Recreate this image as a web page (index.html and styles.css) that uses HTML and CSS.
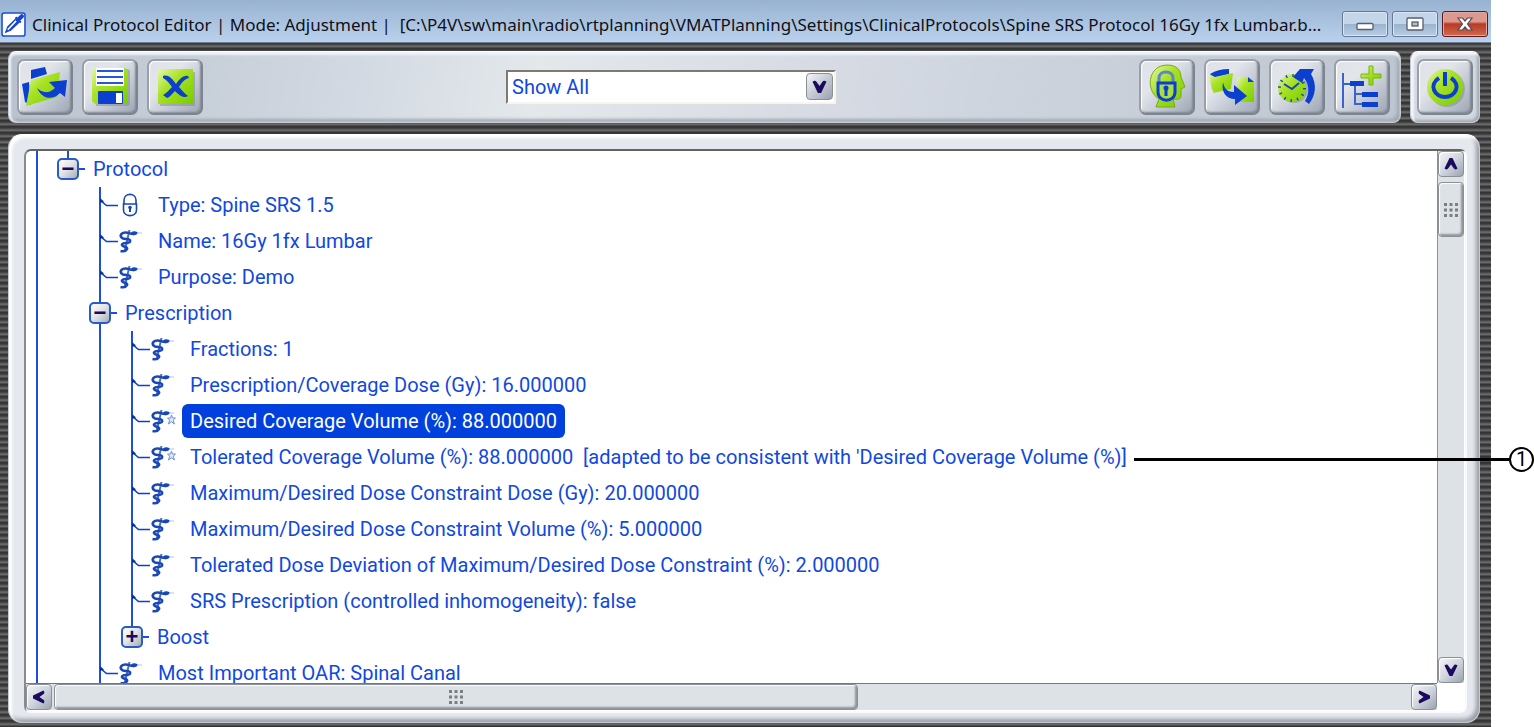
FILE: index.html
```
<!DOCTYPE html>
<html lang="en">
<head>
<meta charset="UTF-8" />
<title>Clinical Protocol Editor</title>
<link rel="stylesheet" href="styles.css">
</head>
<body>

<!-- shared icons -->
<svg class="defs" aria-hidden="true">
  <defs>
    <linearGradient id="green" x1="0" y1="0" x2="1" y2="1">
      <stop offset="0" stop-color="#e4f7a8" />
      <stop offset="0.4" stop-color="#a9e225" />
      <stop offset="1" stop-color="#78cc00" />
    </linearGradient>
    <symbol id="branch" viewBox="0 0 18 36">
      <path d="M0 13L6.500 18.500H18" fill="none" stroke="#0a40d8" stroke-width="1.600" />
      <path d="M0 11L4 14.500L0 16Z" fill="#0a2f9c" />
    </symbol>
    <symbol id="snake" viewBox="0 0 26 24">
      <path d="M11.500 1L6.500 23" stroke="#4a70c8" stroke-width="2" fill="none" />
      <path d="M17 4.500C14 6.500 11 3 7 3.500C2 4 1.500 8 5 9.500C8 10.500 13 9.500 12 12.500C11 15 5 13 4 15.500C3.500 18 10 17.500 9 20C8 22 5 22.500 2.500 22" stroke="#1a48b8" stroke-width="2.600" fill="none" />
      <path d="M12.500 5C13 1.500 17 1.500 20 3.500C19 6.500 15 7 12.500 5Z" fill="#1746b5" />
      <path d="M19 4H24" stroke="#b4c2e6" stroke-width="1" />
    </symbol>
    <symbol id="star" viewBox="0 0 26 24">
      <path d="M21.500 6L22.500 9L25.500 9L23.200 11.200L24.500 15L21.500 12.800L18.500 15L19.600 11.200L17.500 9H20.500Z" fill="#dfe7fa" stroke="#6f8fd8" stroke-width="1" />
    </symbol>
    <symbol id="lock" viewBox="0 0 26 24">
      <path d="M6 11V7C6 -0.500 18 -0.500 18 7V11" fill="none" stroke="#1746b5" stroke-width="1.600" />
      <path d="M5.500 11H18.500V17C18.500 24.500 5.500 24.500 5.500 17Z" fill="#fff" stroke="#1746b5" stroke-width="1.600" />
      <circle cx="12" cy="14.500" r="1.800" fill="#1746b5" />
      <path d="M12 14V19" stroke="#1746b5" stroke-width="2" />
    </symbol>
    <symbol id="chevron" viewBox="0 0 14 14">
      <path d="M0.500 2.500Q3 0.500 4.500 3L7 6.500L9.500 3Q11 0.500 13.500 2.500L8.500 13H5.500Z" fill="#1c0b5c" />
    </symbol>
    <symbol id="grip" viewBox="0 0 14 14">
      <g fill="#7b7f84">
        <path d="M0 0h3v3h-3zM5.500 0h3v3h-3zM11 0h3v3h-3zM0 5.500h3v3h-3zM5.500 5.500h3v3h-3zM11 5.500h3v3h-3zM0 11h3v3h-3zM5.500 11h3v3h-3zM11 11h3v3h-3z" />
      </g>
    </symbol>
  </defs>
</svg>

<div class="window">
  <header class="titlebar">
    <svg class="app-icon" viewBox="0 0 24 24">
      <rect x="1" y="1" width="22" height="22" rx="2" fill="#fff" stroke="#1c4fd0" stroke-width="1.500" />
      <path d="M3.500 20.500L6 14L14 6L18 10L9.500 18Z" fill="#1746c8" />
      <path d="M6.500 17L14.500 8.500" stroke="#fff" stroke-width="1.500" />
      <path d="M14 5L19 10" stroke="#1746c8" stroke-width="2" />
      <path d="M17 7L20 4" stroke="#1746c8" stroke-width="4" stroke-linecap="round" />
    </svg>
    <h1 class="title">Clinical Protocol Editor | Mode: Adjustment |&nbsp; [C:\P4V\sw\main\radio\rtplanning\VMATPlanning\Settings\ClinicalProtocols\Spine SRS Protocol 16Gy 1fx Lumbar.b...</h1>
    <div class="win-buttons">
      <button class="win-btn" aria-label="Minimize">
        <svg viewBox="0 0 18 14"><rect x="1" y="6.500" width="16" height="6" rx="1" fill="#fff" stroke="#565f6b" stroke-width="1.300" /></svg>
      </button>
      <button class="win-btn" aria-label="Maximize">
        <svg viewBox="0 0 18 14"><rect x="1" y="1" width="16" height="12" rx="1" fill="#fff" stroke="#565f6b" stroke-width="1.300" /><rect x="6" y="5" width="6" height="4" fill="#a9bfd8" stroke="#565f6b" stroke-width="1.300" /></svg>
      </button>
      <button class="win-btn win-close" aria-label="Close">
        <svg viewBox="0 0 18 14"><path d="M2 1H6.500L9 4L11.500 1H16L11.500 7L16 13H11.500L9 10L6.500 13H2L6.500 7Z" fill="#fff" stroke="#5b4a50" stroke-width="1.200" /></svg>
      </button>
    </div>
  </header>

  <div class="bars">
    <div class="panel toolbar">
      <div class="tools">
        <button class="tool" aria-label="Open">
          <svg viewBox="0 0 52 52">
            <path d="M3 23L10 21L12 44L6 41Z" fill="#0a3fd0" />
            <path d="M12 9L26 6L28 13L12 18Z" fill="#0a3fd0" />
            <path d="M12 19L41 11L38 36L7 45Z" fill="url(#green)" />
            <path d="M18 27C23 32 30 33 36 27L30 21L48 19L46 36L41 32C33 40 23 38 18 27Z" fill="#0a3fd0" />
          </svg>
        </button>
        <button class="tool" aria-label="Save">
          <svg viewBox="0 0 52 52">
            <path d="M11 8H43Q46 8 46 11V42Q46 45 43 45H12Z" fill="#7f8792" opacity="0.500" />
            <path d="M10 7H41L44 10V40Q44 43 41 43H11L8 40V9Z" fill="url(#green)" />
            <rect x="12" y="7" width="28" height="18" fill="#fff" />
            <path d="M13 10H39M13 16H39M13 22H39" stroke="#2458d8" stroke-width="2" />
            <rect x="14" y="30" width="25" height="13" rx="1" fill="#0a3fd0" />
            <rect x="32" y="32" width="6" height="10" fill="#fff" />
          </svg>
        </button>
        <button class="tool" aria-label="Discard">
          <svg viewBox="0 0 52 52">
            <rect x="11" y="11" width="35" height="34" fill="#7f8792" opacity="0.500" />
            <rect x="9" y="8" width="35" height="35" fill="url(#green)" />
            <path d="M14 15C20 13 24 19 27 23C30 19 34 14 39 15L40 17C35 18 32 23 30 26C33 29 36 33 39 35C35 38 30 34 26 30C23 33 21 36 18 37L14 34C19 31 21 28 23 26C20 22 18 19 14 17Z" fill="#0a3fd0" />
          </svg>
        </button>
      </div>

      <div class="filter">
        <select class="filter-select" aria-label="Filter">
          <option>Show All</option>
        </select>
        <span class="filter-arrow"><svg viewBox="0 0 14 14"><use href="#chevron" /></svg></span>
      </div>

      <div class="tools">
        <button class="tool" aria-label="Unlock user">
          <svg viewBox="0 0 52 52">
            <path d="M15 46L18 38C6 31 6 10 20 5C31 2 40 6 40 16L44 26L40 28V36Q39 39 32 38L34 46Z" fill="url(#green)" stroke="#78a81c" />
            <path d="M18 22V17C18 9 32 9 32 17V22" fill="none" stroke="#5c86c8" stroke-width="3" />
            <path d="M17 22H34V31C34 42 17 42 17 31Z" fill="#a9dc45" stroke="#0a3fd0" stroke-width="3" />
            <circle cx="25" cy="27" r="2.500" fill="#0a3fd0" /><path d="M25 26V35" stroke="#0a3fd0" stroke-width="3" />
          </svg>
        </button>
        <button class="tool" aria-label="Transfer">
          <svg viewBox="0 0 52 52">
            <path d="M4 13Q12 8 23 8V13L7 17Z" fill="#0a3fd0" />
            <path d="M3 13L9 16L8 30L6 29ZM9 16L27 12L25 28L7 32Z" fill="url(#green)" />
            <path d="M31 16H41L48 22V41H31Z" fill="url(#green)" />
            <path d="M42 16L48 21H42Z" fill="#0a3fd0" />
            <path d="M17 21C18 28 22 31 28 31V24L41 35L29 44V38C20 38 15 31 17 21Z" fill="#0a3fd0" />
          </svg>
        </button>
        <button class="tool" aria-label="Restore">
          <svg viewBox="0 0 52 52">
            <circle cx="23" cy="28" r="14" fill="#7f8792" opacity="0.500" />
            <circle cx="21" cy="27" r="14" fill="url(#green)" />
            <circle cx="21" cy="27" r="12.500" fill="none" stroke="#1746b5" stroke-width="3" stroke-dasharray="1.400 5.140" />
            <path d="M13 23L21 28L28 22" fill="none" stroke="#1746b5" stroke-width="2" />
            <path d="M22 16L29 8H43L40 13C46 23 45 34 38 43L34 40C39 32 38 23 33 17L31 22Z" fill="#0a3fd0" />
          </svg>
        </button>
        <button class="tool" aria-label="Add node">
          <svg viewBox="0 0 52 52">
            <path d="M7 12V47M7 23H26M19 23V43H27M19 33H27" fill="none" stroke="#3a63cc" stroke-width="2" />
            <path d="M14 20H28V25H14ZM26 31H42V36H26ZM26 41H42V46H26Z" fill="#0a3fd0" />
            <path d="M33 5H37V13H45V17H37V24H33V17H25V13H33Z" fill="url(#green)" stroke="#78b80c" />
          </svg>
        </button>
      </div>
    </div>

    <div class="panel power">
      <button class="tool" aria-label="Exit">
        <svg viewBox="0 0 52 52">
          <circle cx="28" cy="28" r="18" fill="#7f8792" opacity="0.500" />
          <circle cx="26" cy="26" r="18" fill="url(#green)" />
          <path d="M20 17C9 24 16 36 26 36C36 36 43 24 32 17M26 11V25" fill="none" stroke="#0a3fd0" stroke-width="4" />
        </svg>
      </button>
    </div>
  </div>

  <main class="panel content">
    <div class="well">
      <div class="viewport">
        <ul class="tree">
          <li class="node-item">
            <div class="row"><button class="toggle" aria-label="Collapse Protocol">&minus;</button><span class="label">Protocol</span></div>
            <ul>
              <li><div class="row leaf"><svg class="branch"><use href="#branch" /></svg><svg class="icon"><use href="#lock" /></svg><span class="label">Type: Spine SRS 1.5</span></div></li>
              <li><div class="row leaf"><svg class="branch"><use href="#branch" /></svg><svg class="icon"><use href="#snake" /></svg><span class="label">Name: 16Gy 1fx Lumbar</span></div></li>
              <li><div class="row leaf"><svg class="branch"><use href="#branch" /></svg><svg class="icon"><use href="#snake" /></svg><span class="label">Purpose: Demo</span></div></li>
              <li>
                <div class="row"><button class="toggle" aria-label="Collapse Prescription">&minus;</button><span class="label">Prescription</span></div>
                <ul>
                  <li><div class="row leaf"><svg class="branch"><use href="#branch" /></svg><svg class="icon"><use href="#snake" /></svg><span class="label">Fractions: 1</span></div></li>
                  <li><div class="row leaf"><svg class="branch"><use href="#branch" /></svg><svg class="icon"><use href="#snake" /></svg><span class="label">Prescription/Coverage Dose (Gy): 16.000000</span></div></li>
                  <li><div class="row leaf"><svg class="branch"><use href="#branch" /></svg><svg class="icon"><use href="#snake" /><use href="#star" /></svg><span class="label selected">Desired Coverage Volume (%): 88.000000</span></div></li>
                  <li><div class="row leaf"><svg class="branch"><use href="#branch" /></svg><svg class="icon"><use href="#snake" /><use href="#star" /></svg><span class="label">Tolerated Coverage Volume (%): 88.000000  [adapted to be consistent with 'Desired Coverage Volume (%)]</span></div></li>
                  <li><div class="row leaf"><svg class="branch"><use href="#branch" /></svg><svg class="icon"><use href="#snake" /></svg><span class="label">Maximum/Desired Dose Constraint Dose (Gy): 20.000000</span></div></li>
                  <li><div class="row leaf"><svg class="branch"><use href="#branch" /></svg><svg class="icon"><use href="#snake" /></svg><span class="label">Maximum/Desired Dose Constraint Volume (%): 5.000000</span></div></li>
                  <li><div class="row leaf"><svg class="branch"><use href="#branch" /></svg><svg class="icon"><use href="#snake" /></svg><span class="label">Tolerated Dose Deviation of Maximum/Desired Dose Constraint (%): 2.000000</span></div></li>
                  <li><div class="row leaf"><svg class="branch"><use href="#branch" /></svg><svg class="icon"><use href="#snake" /></svg><span class="label">SRS Prescription (controlled inhomogeneity): false</span></div></li>
                  <li class="last"><div class="row"><button class="toggle" aria-label="Expand Boost">+</button><span class="label">Boost</span></div></li>
                </ul>
              </li>
              <li><div class="row leaf"><svg class="branch"><use href="#branch" /></svg><svg class="icon"><use href="#snake" /></svg><span class="label">Most Important OAR: Spinal Canal</span></div></li>
            </ul>
          </li>
        </ul>
      </div>

      <div class="scroll-v">
        <button class="scroll-btn" aria-label="Scroll up"><svg class="up"><use href="#chevron" /></svg></button>
        <div class="thumb"><svg><use href="#grip" /></svg></div>
        <button class="scroll-btn end" aria-label="Scroll down"><svg><use href="#chevron" /></svg></button>
      </div>

      <div class="scroll-h">
        <button class="scroll-btn" aria-label="Scroll left"><svg class="left"><use href="#chevron" /></svg></button>
        <div class="thumb"><svg><use href="#grip" /></svg></div>
        <button class="scroll-btn end" aria-label="Scroll right"><svg class="right"><use href="#chevron" /></svg></button>
      </div>
    </div>
  </main>
</div>

<!-- callout drawn over the window -->
<div class="callout"><span class="callout-line"></span><span class="callout-number">1</span></div>

</body>
</html>
```
FILE: styles.css
```
* {
  box-sizing: border-box;
}
body {
  margin: 0;
  height: 100vh;
  padding-right: 43px;
  background: #fff;
  position: relative;
  overflow: hidden;
  font-family: Roboto, "Liberation Sans", Arial, sans-serif;
  font-size: 20px;
  color: #1048e0;
}
button {
  padding: 0;
  cursor: pointer;
}
svg {
  display: block;
}
.defs {
  position: absolute;
  width: 0;
  height: 0;
}
.window {
  height: 100%;
  display: flex;
  flex-direction: column;
  background: repeating-linear-gradient(#333 0, #3a3a3a 2px, #6a6a6a 4px, #666 5px, #333 6px);
}

/* title bar */
.titlebar {
  display: flex;
  align-items: center;
  height: 43px;
  padding: 6px 3px 0 1px;
  background: linear-gradient(#98b3d1, #b9d1ec);
  border-bottom: 1px solid #6f7f90;
}
.app-icon {
  width: 25px;
  height: 25px;
  margin-right: 6px;
}
.title {
  flex: 1;
  min-width: 0;
  margin: 0;
  white-space: nowrap;
  font: 17px "Noto Sans", "Open Sans", sans-serif;
  color: #101018;
}
.win-buttons {
  display: flex;
  gap: 4px;
}
.win-btn {
  display: flex;
  justify-content: center;
  align-items: center;
  width: 46px;
  height: 26px;
  border: 1px solid #65788f;
  border-radius: 3px;
  background: linear-gradient(#c3d5e9 48%, #9bb3cd 50%, #b6cde6);
  box-shadow: inset 0 0 0 1px #d9e6f4;
}
.win-btn svg {
  width: 18px;
  height: 14px;
}
.win-close {
  border-color: #571c20;
  background: linear-gradient(#dc9a8f 40%, #b93a25 50%, #cf6a50);
  box-shadow: inset 0 0 0 1px #e3a99f;
}

/* toolbar */
.bars {
  display: flex;
  gap: 9px;
  padding: 8px 11px 0 8px;
}
.panel {
  border: 1px solid #c5cad2;
  border-top-color: #fff;
  border-radius: 8px;
}
.toolbar {
  flex: 1;
  display: flex;
  justify-content: space-between;
  align-items: center;
  height: 72px;
  padding: 0 10px 0 8px;
  background: linear-gradient(100deg, #b8c2ce, #d3d9e2 25%, #e3e8eb 38%, #d5dae3 60%, #bcc5d0);
  box-shadow: inset 0 3px 2px #eef2fa, inset 2px 0 2px #eef2fa, inset -3px -3px 3px #a2a8b0;
}
.power {
  display: flex;
  align-items: center;
  height: 72px;
  padding: 0 6px;
  background: #d3d8e1;
  box-shadow: inset 3px 3px 2px #f2f4fa, inset -2px -2px 3px #a2a8b0;
}
.tools {
  display: flex;
  gap: 9px;
}
.tool {
  width: 56px;
  height: 56px;
  border: 2px solid #9a9fa8;
  border-right-color: #7d848e;
  border-bottom-color: #7d848e;
  border-radius: 7px;
  background: linear-gradient(135deg, #dfe3e9, #e2e5ea 35%, #c8ced8 60%, #9da6b4);
  box-shadow: inset 1px 1px 1px #fff, inset -1px -1px 2px #7f8895;
}
.tool svg {
  width: 52px;
  height: 52px;
}
.filter {
  position: relative;
}
.filter-select {
  display: block;
  appearance: none;
  width: 330px;
  height: 34px;
  padding: 0 30px 0 4px;
  border: 2px solid #7b7b74;
  border-right-color: #f7f5ec;
  border-bottom-color: #f7f5ec;
  border-radius: 0;
  background: #fff;
  font-family: inherit;
  font-size: 20px;
  color: #1048e0;
}
.filter-arrow {
  position: absolute;
  top: 3px;
  right: 3px;
  display: flex;
  justify-content: center;
  align-items: center;
  width: 27px;
  height: 27px;
  border: 1px solid #8b8f96;
  border-radius: 4px;
  background: linear-gradient(135deg, #f2f4f8, #9aa3b0);
  pointer-events: none;
}
.filter-arrow svg {
  width: 15px;
  height: 15px;
}

/* main panel */
.content {
  flex: 1;
  min-height: 0;
  margin: 11px 11px 4px 8px;
  padding: 14px 12px 9px 15px;
  border-radius: 14px;
  background: #e5e8ee;
  box-shadow: inset 3px 3px 3px #fff, inset -3px -3px 4px #9a9da3;
}
.well {
  display: grid;
  grid-template-columns: 1fr 27px;
  grid-template-rows: 1fr 27px;
  height: 100%;
  padding: 0 1px 1px 0;
  border: 2px solid #fafbfc;
  border-top-color: #62665f;
  border-left-color: #888b8c;
  border-radius: 7px;
  background: #fff;
}
.viewport {
  min-width: 0;
  overflow: hidden;
  padding-left: 10px;
}

/* tree */
.tree {
  border-left: 2px solid #1c50dc;
  padding-left: 19px;
}
ul {
  margin: 0;
  padding: 0;
  list-style: none;
}
.tree li {
  background: linear-gradient(#1c50dc, #1c50dc) 10px 0 / 2px 100% no-repeat;
}
.tree .node-item,
.tree .last {
  background-size: 2px 18px;
}
.tree li ul {
  margin-left: 32px;
}
.row {
  display: flex;
  align-items: center;
  height: 36px;
}
.toggle {
  width: 22px;
  height: 22px;
  border: 2px solid #2a59c8;
  border-radius: 5px;
  background: linear-gradient(135deg, #fff, #dfe3e6 50%, #a8adb3);
  font: bold 22px/18px "Liberation Sans", Arial, sans-serif;
  color: #1c0b5c;
}
.toggle + .label::before {
  content: "";
  position: absolute;
  left: 0;
  top: 16px;
  width: 6px;
  height: 2px;
  background: #1c50dc;
}
.label {
  position: relative;
  height: 34px;
  padding: 0 8px;
  border-radius: 6px;
  line-height: 34px;
  white-space: pre;
}
.toggle + .label {
  padding-left: 14px;
}
.branch {
  width: 18px;
  height: 36px;
  margin-left: 11px;
}
.icon {
  width: 26px;
  height: 24px;
  margin-right: 6px;
}
.selected {
  background: #0040dc;
  color: #fff;
}

/* scroll bars */
.scroll-v,
.scroll-h {
  display: flex;
  background: #dde2e6;
}
.scroll-v {
  flex-direction: column;
  border-left: 1px solid #8d9196;
}
.scroll-h {
  border-top: 1px solid #74797d;
}
.scroll-btn,
.thumb {
  display: flex;
  justify-content: center;
  align-items: center;
  flex: none;
  border: 1px solid #8b8f96;
  border-radius: 4px;
}
.scroll-btn {
  width: 26px;
  height: 26px;
  background: linear-gradient(135deg, #f4f5f8, #d0d6de 50%, #9aa3b0);
  box-shadow: inset 1px 1px 1px #fff;
}
.scroll-btn svg,
.thumb svg {
  width: 14px;
  height: 14px;
}
.thumb {
  background: #dde2e6;
  box-shadow: inset 1px 1px 1px #fff, inset -2px -2px 2px #8f949b;
}
.scroll-v .thumb {
  height: 55px;
  margin-top: 5px;
}
.scroll-h .thumb {
  width: 57%;
  margin-left: 2px;
}
.scroll-v .end {
  margin-top: auto;
}
.scroll-h .end {
  margin-left: auto;
}
.up {
  transform: rotate(180deg);
}
.left {
  transform: rotate(90deg);
}
.right {
  transform: rotate(-90deg);
}

/* callout */
.callout {
  position: absolute;
  top: 447px;
  right: 0;
  display: flex;
  align-items: center;
  width: 400px;
  color: #000;
}
.callout-line {
  flex: 1;
  height: 3px;
  background: #000;
}
.callout-number {
  width: 25px;
  height: 25px;
  border: 2px solid #000;
  border-radius: 50%;
  background: #fff;
  line-height: 21px;
  text-align: center;
}
```
